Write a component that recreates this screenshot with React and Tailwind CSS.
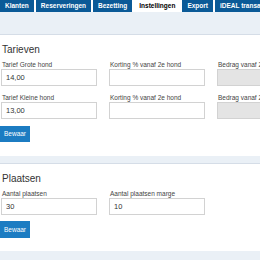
import React from 'react';

const tabs = ['Klanten', 'Reserveringen', 'Bezetting', 'Instellingen', 'Export', 'iDEAL transacties'];

const Field = ({ label, value, disabled, className = '' }) => (
  <div className={`w-[96px] shrink-0 ${className}`}>
    <label className="block text-[6.5px] leading-[8px] text-[#444] whitespace-nowrap pl-[1px]">{label}</label>
    <input
      type="text"
      defaultValue={value}
      disabled={disabled}
      className={`block w-full h-[17px] px-[4px] text-[7.5px] text-[#333] border border-[#d2d2d2] outline-none ${
        disabled ? 'bg-[#e4e4e4]' : 'bg-white'
      }`}
    />
  </div>
);

const Band = ({ h }) => <div className={`${h} bg-[#eaf0f6] border-b border-[#d5dde7]`} />;

export default function App() {
  return (
    <div className="w-[260px] h-[260px] overflow-hidden bg-white font-['Liberation_Sans',Arial,sans-serif]">
      {/* Tabs */}
      <div className="flex gap-[2px] bg-white h-[12px] whitespace-nowrap">
        {tabs.map((t) => (
          <div
            key={t}
            className={`shrink-0 px-[5px] text-[6.5px] leading-[12px] font-bold ${
              t === 'Instellingen' ? 'bg-white text-black' : 'bg-[#0b5a97] text-white'
            }`}
          >
            {t}
          </div>
        ))}
      </div>

      <Band h="h-[23px]" />

      {/* Tarieven */}
      <div className="pl-[1px] pt-[9px] pb-[13px]">
        <h2 className="text-[10px] leading-[12px] text-[#333] pl-[1px]">Tarieven</h2>
        <div className="flex gap-[12px] mt-[5px]">
          <Field label="Tarief Grote hond" value="14,00" />
          <Field label="Korting % vanaf 2e hond" value="" />
          <Field label="Bedrag vanaf 2e hond" value="" disabled />
        </div>
        <div className="flex gap-[12px] mt-[8px]">
          <Field label="Tarief Kleine hond" value="13,00" />
          <Field label="Korting % vanaf 2e hond" value="" />
          <Field label="Bedrag vanaf 2e hond" value="" disabled />
        </div>
        <button className="mt-[6px] -ml-[1px] h-[16px] px-[4px] bg-[#1c7cc2] text-white text-[6.5px]">Bewaar</button>
      </div>

      <Band h="h-[8px]" />

      {/* Plaatsen */}
      <div className="pl-[1px] pt-[9px] pb-[12px]">
        <h2 className="text-[10px] leading-[12px] text-[#333] pl-[1px]">Plaatsen</h2>
        <div className="flex gap-[12px] mt-[5px]">
          <Field label="Aantal plaatsen" value="30" />
          <Field label="Aantal plaatsen marge" value="10" />
        </div>
        <button className="mt-[6px] -ml-[1px] h-[17px] px-[4px] bg-[#1c7cc2] text-white text-[6.5px]">Bewaar</button>
      </div>

      <Band h="h-[10px]" />
    </div>
  );
}
